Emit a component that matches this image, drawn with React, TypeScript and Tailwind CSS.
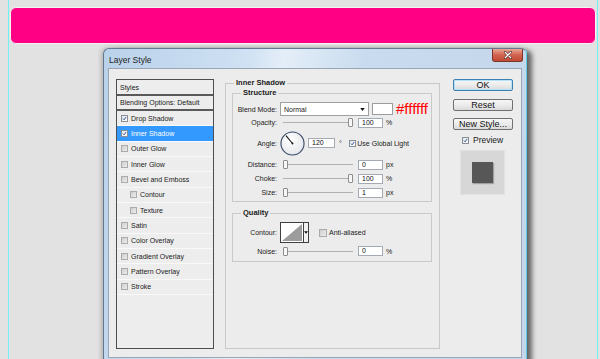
import React from "react";

const CheckMark = () => (
  <svg viewBox="0 0 10 10" className="w-full h-full">
    <path d="M2 5.2 L4.2 7.6 L8.3 2" stroke="#1f3f86" strokeWidth="1.7" fill="none" />
  </svg>
);

const Box7 = ({ checked }: { checked?: boolean }) =>
  checked ? (
    <span className="w-[7px] h-[7px] shrink-0 border border-[#8a8f96] bg-gradient-to-br from-[#dfe4ea] to-white flex">
      <CheckMark />
    </span>
  ) : (
    <span className="w-[7px] h-[7px] shrink-0 border border-[#ababab] bg-gradient-to-br from-[#cfcfcf] to-[#ededed]" />
  );

const Box8 = ({ checked }: { checked?: boolean }) =>
  checked ? (
    <span className="w-[8px] h-[8px] shrink-0 border border-[#8a8f96] bg-gradient-to-br from-[#dfe4ea] to-white flex">
      <CheckMark />
    </span>
  ) : (
    <span className="w-[8px] h-[8px] shrink-0 border border-[#ababab] bg-gradient-to-br from-[#cfcfcf] to-[#ededed]" />
  );

const Thumb = () => (
  <div className="w-[5px] h-[9px] shrink-0 border border-[#8c8c8c] bg-[#f7f7f7] rounded-[1px]" />
);

const Slider = ({ pos }: { pos: "start" | "end" }) => (
  <div className="w-[73px] pl-[3px] h-full flex items-center shrink-0">
    {pos === "start" && <Thumb />}
    <div className="flex-1 h-px bg-[#b0b0b0]" />
    {pos === "end" && <Thumb />}
  </div>
);

const Input = ({ v, w = "w-[25px]", ml = "ml-[5px]" }: { v: string; w?: string; ml?: string }) => (
  <div className={`${ml} ${w} h-[10px] shrink-0 border border-[#a3aab3] bg-white pl-[3px] text-[7px] leading-[8px] text-[#111]`}>
    {v}
  </div>
);

const Row = ({
  label,
  className,
  children,
}: {
  label: string;
  className: string;
  children: React.ReactNode;
}) => (
  <div className={`flex items-center ${className}`}>
    <div className="w-[44px] shrink-0 text-right">{label}</div>
    <div className="ml-[3px] flex items-center h-full">{children}</div>
  </div>
);

const items: { label: string; checked?: boolean; selected?: boolean; nested?: boolean }[] = [
  { label: "Drop Shadow", checked: true },
  { label: "Inner Shadow", checked: true, selected: true },
  { label: "Outer Glow" },
  { label: "Inner Glow" },
  { label: "Bevel and Emboss" },
  { label: "Contour", nested: true },
  { label: "Texture", nested: true },
  { label: "Satin" },
  { label: "Color Overlay" },
  { label: "Gradient Overlay" },
  { label: "Pattern Overlay" },
  { label: "Stroke" },
];

const Btn = ({ children, primary, className }: { children: React.ReactNode; primary?: boolean; className?: string }) => (
  <div
    className={`w-[60px] h-[12px] flex items-center justify-center rounded-[2px] text-[9px] leading-[10px] text-[#111] bg-gradient-to-b from-[#f6f6f6] via-[#ececec] to-[#d9d9d9] ${
      primary ? "border border-[#3c7fb1] shadow-[inset_0_0_0_1px_#b4e2f8]" : "border border-[#707070]"
    } ${className ?? ""}`}
  >
    {children}
  </div>
);

export default function App() {
  return (
    <div className="w-[600px] h-[359px] overflow-hidden bg-[#e2e2e2] pl-[8px] font-['Liberation_Sans',Arial,sans-serif] text-[#1a1a1a]">
      <div className="w-[590px] h-full border-x border-[#6ef2f4] pt-[7px]">
        <div className="ml-[1px] w-[586px] h-[37px] rounded-[6px] bg-[#ff0084] border border-[#f3f3f3]" />

        {/* dialog window */}
        <div className="mt-[4px] ml-[94px] w-[424px] h-[315px] rounded-t-[6px] border border-[#667891] border-r-[#5ccbe6] bg-[linear-gradient(100deg,#b9d1ea_0%,#cfe1f3_30%,#e4eef8_38%,#c9dcef_55%,#c3d6ea_100%)] shadow-[5px_2px_5px_rgba(0,0,0,0.55),-2px_0_4px_rgba(0,0,0,0.2)] flex flex-col px-[4px] pb-[4px]">
          <div className="h-[19px] flex justify-between items-start shrink-0">
            <span className="pt-[6px] pl-[1px] text-[8.5px] leading-[10px] text-[#1e1e1e]">Layer Style</span>
            <div className="-mr-[1px] w-[31px] h-[13px] rounded-b-[3px] border border-t-0 border-[#7c3528] bg-gradient-to-b from-[#e9a797] via-[#d2624f] to-[#c24a34] flex items-center justify-center">
              <svg viewBox="0 0 12 10" className="w-[10px] h-[8px]">
                <path d="M2.5 1.5 L9.5 8.5 M9.5 1.5 L2.5 8.5" stroke="#4a1e16" strokeWidth="3.2" strokeLinecap="round" />
                <path d="M2.5 1.5 L9.5 8.5 M9.5 1.5 L2.5 8.5" stroke="#ffffff" strokeWidth="1.6" strokeLinecap="round" />
              </svg>
            </div>
          </div>

          {/* client area */}
          <div className="flex-1 border border-[#98a6b6] bg-[#ececec] flex items-start text-[7px] leading-[9px]">
            {/* styles list */}
            <div className="ml-[7px] mt-[10px] w-[98px] h-[270px] shrink-0 border border-[#4e4e4e] bg-[#ededed] flex flex-col">
              <div className="h-[16px] shrink-0 border-b-2 border-[#5a5a5a] flex items-center pl-[3px]">Styles</div>
              <div className="h-[15px] shrink-0 border-b-2 border-[#5a5a5a] flex items-center pl-[3px]">
                Blending Options: Default
              </div>
              {items.map((it) => (
                <div
                  key={it.label}
                  className={`h-[15.33px] shrink-0 border-b border-[#f9f9f9] flex items-center ${
                    it.nested ? "pl-[13px]" : "pl-[4px]"
                  } ${it.selected ? "bg-[#3399ff] text-white border-[#3399ff]" : ""}`}
                >
                  <Box7 checked={it.checked} />
                  <span className="ml-[3px]">{it.label}</span>
                </div>
              ))}
            </div>

            {/* Inner Shadow group */}
            <fieldset className="ml-[11px] mt-[9px] w-[215px] h-[271px] shrink-0 border border-[#c9c9c9]">
              <legend className="ml-[8px] px-[2px] font-bold text-[7.5px] leading-[10px]">Inner Shadow</legend>

              <fieldset className="ml-[6px] w-[200px] border border-[#c9c9c9] pb-[3px]">
                <legend className="ml-[8px] px-[2px] font-bold text-[7.5px] leading-[10px]">Structure</legend>
                <Row label="Blend Mode:" className="mt-[4px] h-[14px]">
                  <div className="w-[89px] h-[14px] border border-[#a0a0a0] bg-white flex items-center justify-between pl-[3px] pr-[3px]">
                    <span>Normal</span>
                    <svg viewBox="0 0 6 4" className="w-[5px] h-[3px]">
                      <path d="M0 0 L6 0 L3 4 Z" fill="#111" />
                    </svg>
                  </div>
                  <div className="ml-[3px] w-[21px] h-[12px] border border-[#9c9c9c] bg-white" />
                  <span className="ml-[3px] text-[15px] leading-[14px] text-[#ff0000]">#ffffff</span>
                </Row>
                <Row label="Opacity:" className="mt-[1px] h-[11px]">
                  <Slider pos="end" />
                  <Input v="100" />
                  <span className="ml-[3px]">%</span>
                </Row>
                <Row label="Angle:" className="mt-[2px] h-[26px]">
                  <svg viewBox="0 0 26 26" className="w-[25px] h-[25px] shrink-0">
                    <defs>
                      <radialGradient id="dial" cx="0.4" cy="0.35" r="0.7">
                        <stop offset="0" stopColor="#ffffff" />
                        <stop offset="1" stopColor="#e4e6ea" />
                      </radialGradient>
                    </defs>
                    <circle cx="13" cy="13" r="12" fill="url(#dial)" stroke="#3c4d6b" strokeWidth="1.2" />
                    <line x1="13" y1="13" x2="6.2" y2="4.8" stroke="#111" strokeWidth="1.1" />
                    <circle cx="13" cy="13" r="1" fill="#111" />
                  </svg>
                  <Input v="120" w="w-[27px]" ml="ml-[3px]" />
                  <span className="ml-[4px]">°</span>
                  <span className="ml-[7px] flex items-center">
                    <Box7 checked />
                  </span>
                  <span className="ml-[1.5px]">Use Global Light</span>
                </Row>
                <Row label="Distance:" className="mt-[3px] h-[11px]">
                  <Slider pos="start" />
                  <Input v="0" />
                  <span className="ml-[3px]">px</span>
                </Row>
                <Row label="Choke:" className="mt-[3px] h-[11px]">
                  <Slider pos="end" />
                  <Input v="100" />
                  <span className="ml-[3px]">%</span>
                </Row>
                <Row label="Size:" className="mt-[3px] h-[11px]">
                  <Slider pos="start" />
                  <Input v="1" />
                  <span className="ml-[3px]">px</span>
                </Row>
              </fieldset>

              <fieldset className="ml-[6px] mt-[6px] w-[200px] border border-[#c9c9c9] pb-[5px]">
                <legend className="ml-[8px] px-[2px] font-bold text-[7.5px] leading-[10px]">Quality</legend>
                <Row label="Contour:" className="mt-[4px] h-[21px]">
                  <div className="w-[29px] h-[21px] border border-[#3f3f3f] bg-white flex">
                    <svg viewBox="0 0 22 19" preserveAspectRatio="none" className="w-[22px] h-[19px]">
                      <polygon points="1,18 21,1 21,18" fill="#9c9c9c" />
                    </svg>
                    <div className="flex-1 border-l border-[#3f3f3f] bg-[#f2f2f2] flex items-center justify-center">
                      <svg viewBox="0 0 6 4" className="w-[4px] h-[3px]">
                        <path d="M0 0 L6 0 L3 4 Z" fill="#111" />
                      </svg>
                    </div>
                  </div>
                  <span className="ml-[10px] flex items-center">
                    <Box8 />
                  </span>
                  <span className="ml-[2px]">Anti-aliased</span>
                </Row>
                <Row label="Noise:" className="mt-[3px] h-[10px]">
                  <Slider pos="start" />
                  <Input v="0" />
                  <span className="ml-[3px]">%</span>
                </Row>
              </fieldset>
            </fieldset>

            {/* buttons column */}
            <div className="ml-[13px] mt-[10px] w-[60px] shrink-0 flex flex-col">
              <Btn primary>OK</Btn>
              <Btn className="mt-[8px]">Reset</Btn>
              <Btn className="mt-[7px]">New Style...</Btn>
              <div className="mt-[6px] h-[9px] pl-[9px] flex items-center">
                <Box7 checked />
                <span className="ml-[4px] text-[8.5px] leading-[9px]">Preview</span>
              </div>
              <div className="mt-[5px] ml-[7px] w-[45px] h-[45px] bg-[#d7d7d7] border border-[#e2e2e2] flex items-center justify-center">
                <div className="w-[21px] h-[21px] bg-[#575757] shadow-[1px_1px_1px_rgba(0,0,0,0.25)]" />
              </div>
            </div>
          </div>
        </div>
      </div>
    </div>
  );
}
